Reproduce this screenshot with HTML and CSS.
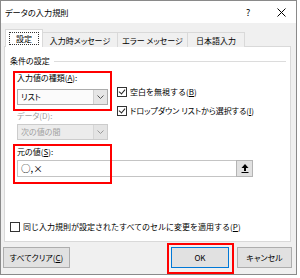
FILE: index.html
```html
<!DOCTYPE html>
<html lang="ja">

<head>
	<title>データの入力規則</title>
	<meta charset="utf-8"/>
	<meta name="viewport" content="width=device-width, initial-scale=1"/>

	<link rel="stylesheet" href="styles.css">
</head>

<body>
	<div class="dialog">
		<div class="titlebar">
			<span class="title">データの入力規則</span>
			<span class="help">?</span>
			<span class="close">
				<svg width="9" height="9" viewBox="0 0 9 9"><path d="M0.5 0.5L8.5 8.5M8.5 0.5L0.5 8.5" stroke="#000" stroke-width="1" fill="none"/></svg>
			</span>
		</div>

		<div class="tabs">
			<div class="tab active"><span class="focus">設定</span></div>
			<div class="tab">入力時メッセージ</div>
			<div class="tab">エラー メッセージ</div>
			<div class="tab">日本語入力</div>
		</div>

		<div class="panel">
			<div class="group">
				<span>条件の設定</span>
				<div class="rule"></div>
			</div>

			<div class="cond">
				<div class="left">
					<div class="label">入力値の種類(<u>A</u>):</div>
					<div class="select">
						<span class="value">リスト</span>
						<span class="arrow"><svg width="7" height="4" viewBox="0 0 7 4"><path d="M0.5 0.5L3.5 3.5L6.5 0.5" stroke="#555" fill="none"/></svg></span>
					</div>
					<div class="label off second">データ(D):</div>
					<div class="select off">
						<span class="value">次の値の間</span>
						<span class="arrow"><svg width="7" height="4" viewBox="0 0 7 4"><path d="M0.5 0.5L3.5 3.5L6.5 0.5" stroke="#999" fill="none"/></svg></span>
					</div>
				</div>
				<div class="right">
					<div class="check first plain"><span class="box checked"></span>空白を無視する(<u>B</u>)</div>
					<div class="check"><span class="box checked"></span>ドロップダウン リストから選択する(<u>I</u>)</div>
				</div>
			</div>

			<div class="source">
				<div class="label">元の値(<u>S</u>):</div>
				<div class="field">
					<span class="text">○,×</span>
					<span class="pick"><svg width="8" height="9" viewBox="0 0 8 9"><path d="M4 0L0.5 4H3V7H5V4H7.5Z" fill="#000"/><rect x="0.5" y="8" width="7" height="1" fill="#000"/></svg></span>
				</div>
			</div>

			<div class="check apply plain"><span class="box"></span>同じ入力規則が設定されたすべてのセルに変更を適用する(<u>P</u>)</div>
		</div>

		<div class="buttons">
			<div class="btn clear">すべてクリア(<u>C</u>)</div>
			<div class="btn ok">OK</div>
			<div class="btn">キャンセル</div>
		</div>

		<!-- annotation boxes -->
		<div class="mark mark-type"></div>
		<div class="mark mark-source"></div>
		<div class="mark mark-ok"></div>
	</div>
</body>
</html>
```

FILE: styles.css
```css
body {
	margin: 0;
	background: #fff;
	font-family: "Noto Sans CJK JP", "Noto Sans", sans-serif;
	font-size: 8px;
	font-feature-settings: "palt";
	color: #000;
}

u {
	text-decoration-thickness: 1px;
	text-underline-offset: 1px;
}

.dialog {
	position: relative;
	width: 295px;
	height: 273px;
	border: 1px solid #8a8a8a;
	background: #f0f0f0;
	display: flex;
	flex-direction: column;
}

.titlebar {
	height: 22px;
	background: #fff;
	display: flex;
	align-items: center;
	padding-left: 4px;
}

.title {
	flex: 1;
	font-size: 8.2px;
}

.help {
	width: 10px;
	font-size: 9px;
	margin-right: 21px;
}

.close {
	width: 9px;
	height: 9px;
	margin-right: 10px;
	display: flex;
}

.tabs {
	display: flex;
	align-items: flex-end;
	height: 24px;
	padding-left: 4px;
	margin-bottom: -1px;
	position: relative;
	z-index: 1;
}

.tab {
	height: 15px;
	border: 1px solid #d9d9d9;
	border-bottom: none;
	border-left: none;
	background: #f0f0f0;
	display: flex;
	align-items: center;
	justify-content: center;
	box-sizing: border-box;
}

.tab:nth-child(2) { width: 75px; }
.tab:nth-child(3) { width: 70px; }
.tab:nth-child(4) { width: 57px; }

.tab.active {
	width: 38px;
	height: 18px;
	background: #fff;
	border-left: 1px solid #d9d9d9;
	padding-bottom: 1px;
}

.focus {
	border: 1px dotted #333;
	padding: 0 6px;
	line-height: 11px;
}

.panel {
	margin-left: 3px;
	width: 287px;
	height: 196px;
	box-sizing: border-box;
	background: #fff;
	border: 1px solid #d9d9d9;
	display: flex;
	flex-direction: column;
	padding: 9px 0 9px 0;
}

.group {
	display: flex;
	align-items: center;
	padding-left: 5px;
	line-height: 10px;
}

.rule {
	flex: 1;
	height: 1px;
	background: #dcdcdc;
	margin: 0 4px 0 4px;
}

.cond {
	display: flex;
	padding-left: 12px;
}

.left {
	width: 91px;
	display: flex;
	flex-direction: column;
}

.label {
	line-height: 10px;
	margin-top: 7px;
	margin-bottom: 6px;
}

.label.second {
	margin-top: 6px;
	margin-bottom: 3px;
}

.label.off {
	color: #a0a0a0;
}

.select {
	height: 16px;
	box-sizing: border-box;
	border: 1px solid #acacac;
	background: #fbfbfb;
	display: flex;
}

.select .value {
	flex: 1;
	padding-left: 3px;
	line-height: 14px;
}

.select .arrow {
	width: 13px;
	background: #e6e6e6;
	border-left: 1px solid #cfcfcf;
	display: flex;
	align-items: center;
	justify-content: center;
}

.select.off {
	border-color: #cccccc;
	background: #ececec;
	color: #a0a0a0;
}

.select.off .arrow {
	background: #e4e4e4;
	border-left-color: #d6d6d6;
}

.right {
	margin-left: 9px;
	display: flex;
	flex-direction: column;
}

.check {
	display: flex;
	align-items: center;
	line-height: 10px;
	margin-top: 9px;
}

.check.first {
	margin-top: 21px;
}

.check.plain {
	font-feature-settings: normal;
}

.box {
	width: 10px;
	height: 10px;
	box-sizing: border-box;
	border: 1px solid #333;
	background: #fff;
	margin-right: 3px;
	position: relative;
}

.box.checked::after {
	content: "";
	position: absolute;
	left: 2px;
	top: 0px;
	width: 3px;
	height: 5px;
	border-right: 1px solid #222;
	border-bottom: 1px solid #222;
	transform: rotate(40deg);
}

.source {
	padding-left: 12px;
}

.source .label {
	margin-top: 7px;
	margin-bottom: 3px;
}

.field {
	width: 236px;
	height: 17px;
	display: flex;
}

.field .text {
	flex: 1;
	border: 1px solid #c4c4c4;
	border-right: none;
	background: #fff;
	padding-left: 3px;
	line-height: 15px;
	font-size: 9.5px;
	font-feature-settings: normal;
}

.pick {
	width: 17px;
	box-sizing: border-box;
	border: 1px solid #b4b4b4;
	background: #e1e1e1;
	display: flex;
	align-items: center;
	justify-content: center;
}

.check.apply {
	margin-top: auto;
	padding-left: 5px;
}

.buttons {
	display: flex;
	padding: 5px 0 0 2px;
}

.btn {
	width: 67px;
	height: 21px;
	box-sizing: border-box;
	border: 1px solid #adadad;
	background: #e1e1e1;
	display: flex;
	align-items: center;
	justify-content: center;
}

.btn.clear {
	margin-right: auto;
}

.btn.ok {
	width: 58px;
	border-color: #0078d7;
	margin-right: 8px;
}

.btn:last-child {
	width: 55px;
	margin-right: 4px;
}

.mark {
	position: absolute;
	border: 2px solid #ff0000;
	box-sizing: border-box;
}

.mark-type {
	left: 12px;
	top: 70px;
	width: 99px;
	height: 40px;
}

.mark-source {
	left: 12px;
	top: 143px;
	width: 99px;
	height: 40px;
}

.mark-ok {
	left: 166px;
	top: 242px;
	width: 67px;
	height: 31px;
}
```
